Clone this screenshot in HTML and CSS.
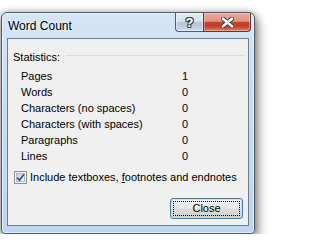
FILE: index.html
```html
<!DOCTYPE html>
<html>
<head>
<meta charset="utf-8">
<link rel="stylesheet" href="styles.css">
</head>
<body>
<div class="window">
  <div class="titlebar">
    <span class="title">Word Count</span>
    <div class="caption-btns">
      <div class="cbtn help"><span>?</span></div>
      <div class="cbtn close">
        <svg width="13" height="11" viewBox="0 0 13 11">
          <path d="M2 1.8 L11 9.2 M11 1.8 L2 9.2" stroke="#3a3f45" stroke-width="4.4" stroke-linecap="square" fill="none"/>
          <path d="M2 1.8 L11 9.2 M11 1.8 L2 9.2" stroke="#ffffff" stroke-width="2.4" stroke-linecap="square" fill="none"/>
        </svg>
      </div>
    </div>
  </div>
  <div class="client">
    <div class="group-head"><span>Statistics:</span><div class="rule"></div></div>
    <div class="stats">
      <span>Pages</span><span>1</span>
      <span>Words</span><span>0</span>
      <span>Characters (no spaces)</span><span>0</span>
      <span>Characters (with spaces)</span><span>0</span>
      <span>Paragraphs</span><span>0</span>
      <span>Lines</span><span>0</span>
    </div>
    <div class="check">
      <span class="box"><span class="inner"><svg width="9" height="9" viewBox="0 0 9 9"><path d="M1.3 4.6 L3.5 7.2 L7.8 1.4" stroke="#2c4f9e" stroke-width="1.7" fill="none"/></svg></span></span>
      <span class="check-label">Include textboxes, <u>f</u>ootnotes and endnotes</span>
    </div>
    <div class="actions">
      <div class="btn"><div class="focus">Close</div></div>
    </div>
  </div>
</div>
</body>
</html>
```
FILE: styles.css
```css
html, body {
  margin: 0;
  background: #ffffff;
}
body {
  box-sizing: border-box;
  padding: 12px 0 0 1px;
  font-family: "Liberation Sans", Arial, sans-serif;
  font-size: 11px;
  color: #000;
}
.window {
  width: 254px;
  height: 222px;
  box-sizing: border-box;
  border: 1px solid #4e5a67;
  border-radius: 6px 6px 4px 4px;
  background: linear-gradient(180deg, #d4e5f6 0%, #c8ddf3 40%, #bdd6f0 100%);
  box-shadow: inset 0 0 0 1px rgba(255,255,255,0.55), 0 0 7px rgba(0,0,0,0.28), 2px 6px 11px 1px rgba(0,0,0,0.45);
  padding: 0 5px 7px 5px;
  display: flex;
  flex-direction: column;
}
.titlebar {
  height: 25px;
  flex: none;
  display: flex;
  align-items: flex-start;
  margin-right: -2px;
}
.title {
  font-size: 12px;
  line-height: 14px;
  margin: 6px 0 0 1px;
  color: #000;
  text-shadow: 0 0 5px rgba(255,255,255,0.9);
}
.caption-btns {
  margin-left: auto;
  display: flex;
  height: 19px;
}
.cbtn {
  box-sizing: border-box;
  height: 19px;
  display: flex;
  align-items: center;
  justify-content: center;
  border: 1px solid #4f5d6c;
  border-top: 0;
}
.help {
  width: 28px;
  border-right: 0;
  border-radius: 0 0 0 4px;
  background: linear-gradient(180deg, #e4ecf5 0%, #d4e0ec 48%, #b5c6d9 52%, #c3d2e3 85%, #d3e0ee 100%);
  box-shadow: inset 0 0 0 1px rgba(255,255,255,0.45);
}
.help span {
  font-weight: bold;
  font-size: 13px;
  line-height: 13px;
  color: #fff;
  margin-top: 1px;
  text-shadow: -1px 0 0 #3d4650, 1px 0 0 #3d4650, 0 -1px 0 #3d4650, 0 1px 0 #3d4650, 1px 1px 0 #3d4650, -1px -1px 0 #3d4650, 1px -1px 0 #3d4650, -1px 1px 0 #3d4650;
}
.close {
  width: 48px;
  border-radius: 0 0 4px 0;
  border-color: #5b3a36;
  background: linear-gradient(180deg, #e9aa9c 0%, #df9281 46%, #c8432c 52%, #c23b25 72%, #d4674d 90%, #e2876b 100%);
  box-shadow: inset 0 0 0 1px rgba(255,210,200,0.45);
}
.close svg {
  display: block;
}
.client {
  flex: 1;
  box-sizing: border-box;
  border: 1px solid #6f7c8a;
  background: #f0f0f0;
  padding: 10px 5px 6px 5px;
  display: flex;
  flex-direction: column;
}
.group-head {
  display: flex;
  height: 16px;
  line-height: 16px;
}
.rule {
  flex: 1;
  height: 1px;
  background: #d5dfe6;
  margin: 6px -2px 0 6px;
}
.stats {
  display: grid;
  grid-template-columns: 161px auto;
  grid-auto-rows: 16px;
  line-height: 16px;
  margin: 3px 0 0 8px;
}
.check {
  display: flex;
  align-items: flex-start;
  height: 16px;
  line-height: 16px;
  margin: 5px 0 0 1px;
}
.box {
  box-sizing: border-box;
  width: 13px;
  height: 13px;
  margin-top: 2px;
  border: 1px solid #8e8f8f;
  background: #f4f4f4;
  padding: 1px;
  display: flex;
}
.box .inner {
  flex: 1;
  box-sizing: border-box;
  border: 1px solid #b3b8bd;
  background: linear-gradient(135deg, #cdd2d8 0%, #eceef0 70%, #f7f7f7 100%);
  display: flex;
  align-items: center;
  justify-content: center;
}
.box svg {
  display: block;
  flex: none;
  margin: -1px;
}
.check-label {
  margin-left: 3px;
}
.actions {
  margin-top: auto;
  display: flex;
  justify-content: flex-end;
}
.btn {
  box-sizing: border-box;
  width: 73px;
  height: 21px;
  border: 1px solid #3c7fb1;
  border-radius: 3px;
  background: linear-gradient(180deg, #f2f2f2 0%, #ebebeb 48%, #dddddd 52%, #cfcfcf 100%);
  box-shadow: inset 0 0 0 1px #bfe3f7;
  padding: 2px;
  display: flex;
}
.focus {
  flex: 1;
  border: 1px dotted #000;
  display: flex;
  align-items: center;
  justify-content: center;
  line-height: 13px;
}
```
